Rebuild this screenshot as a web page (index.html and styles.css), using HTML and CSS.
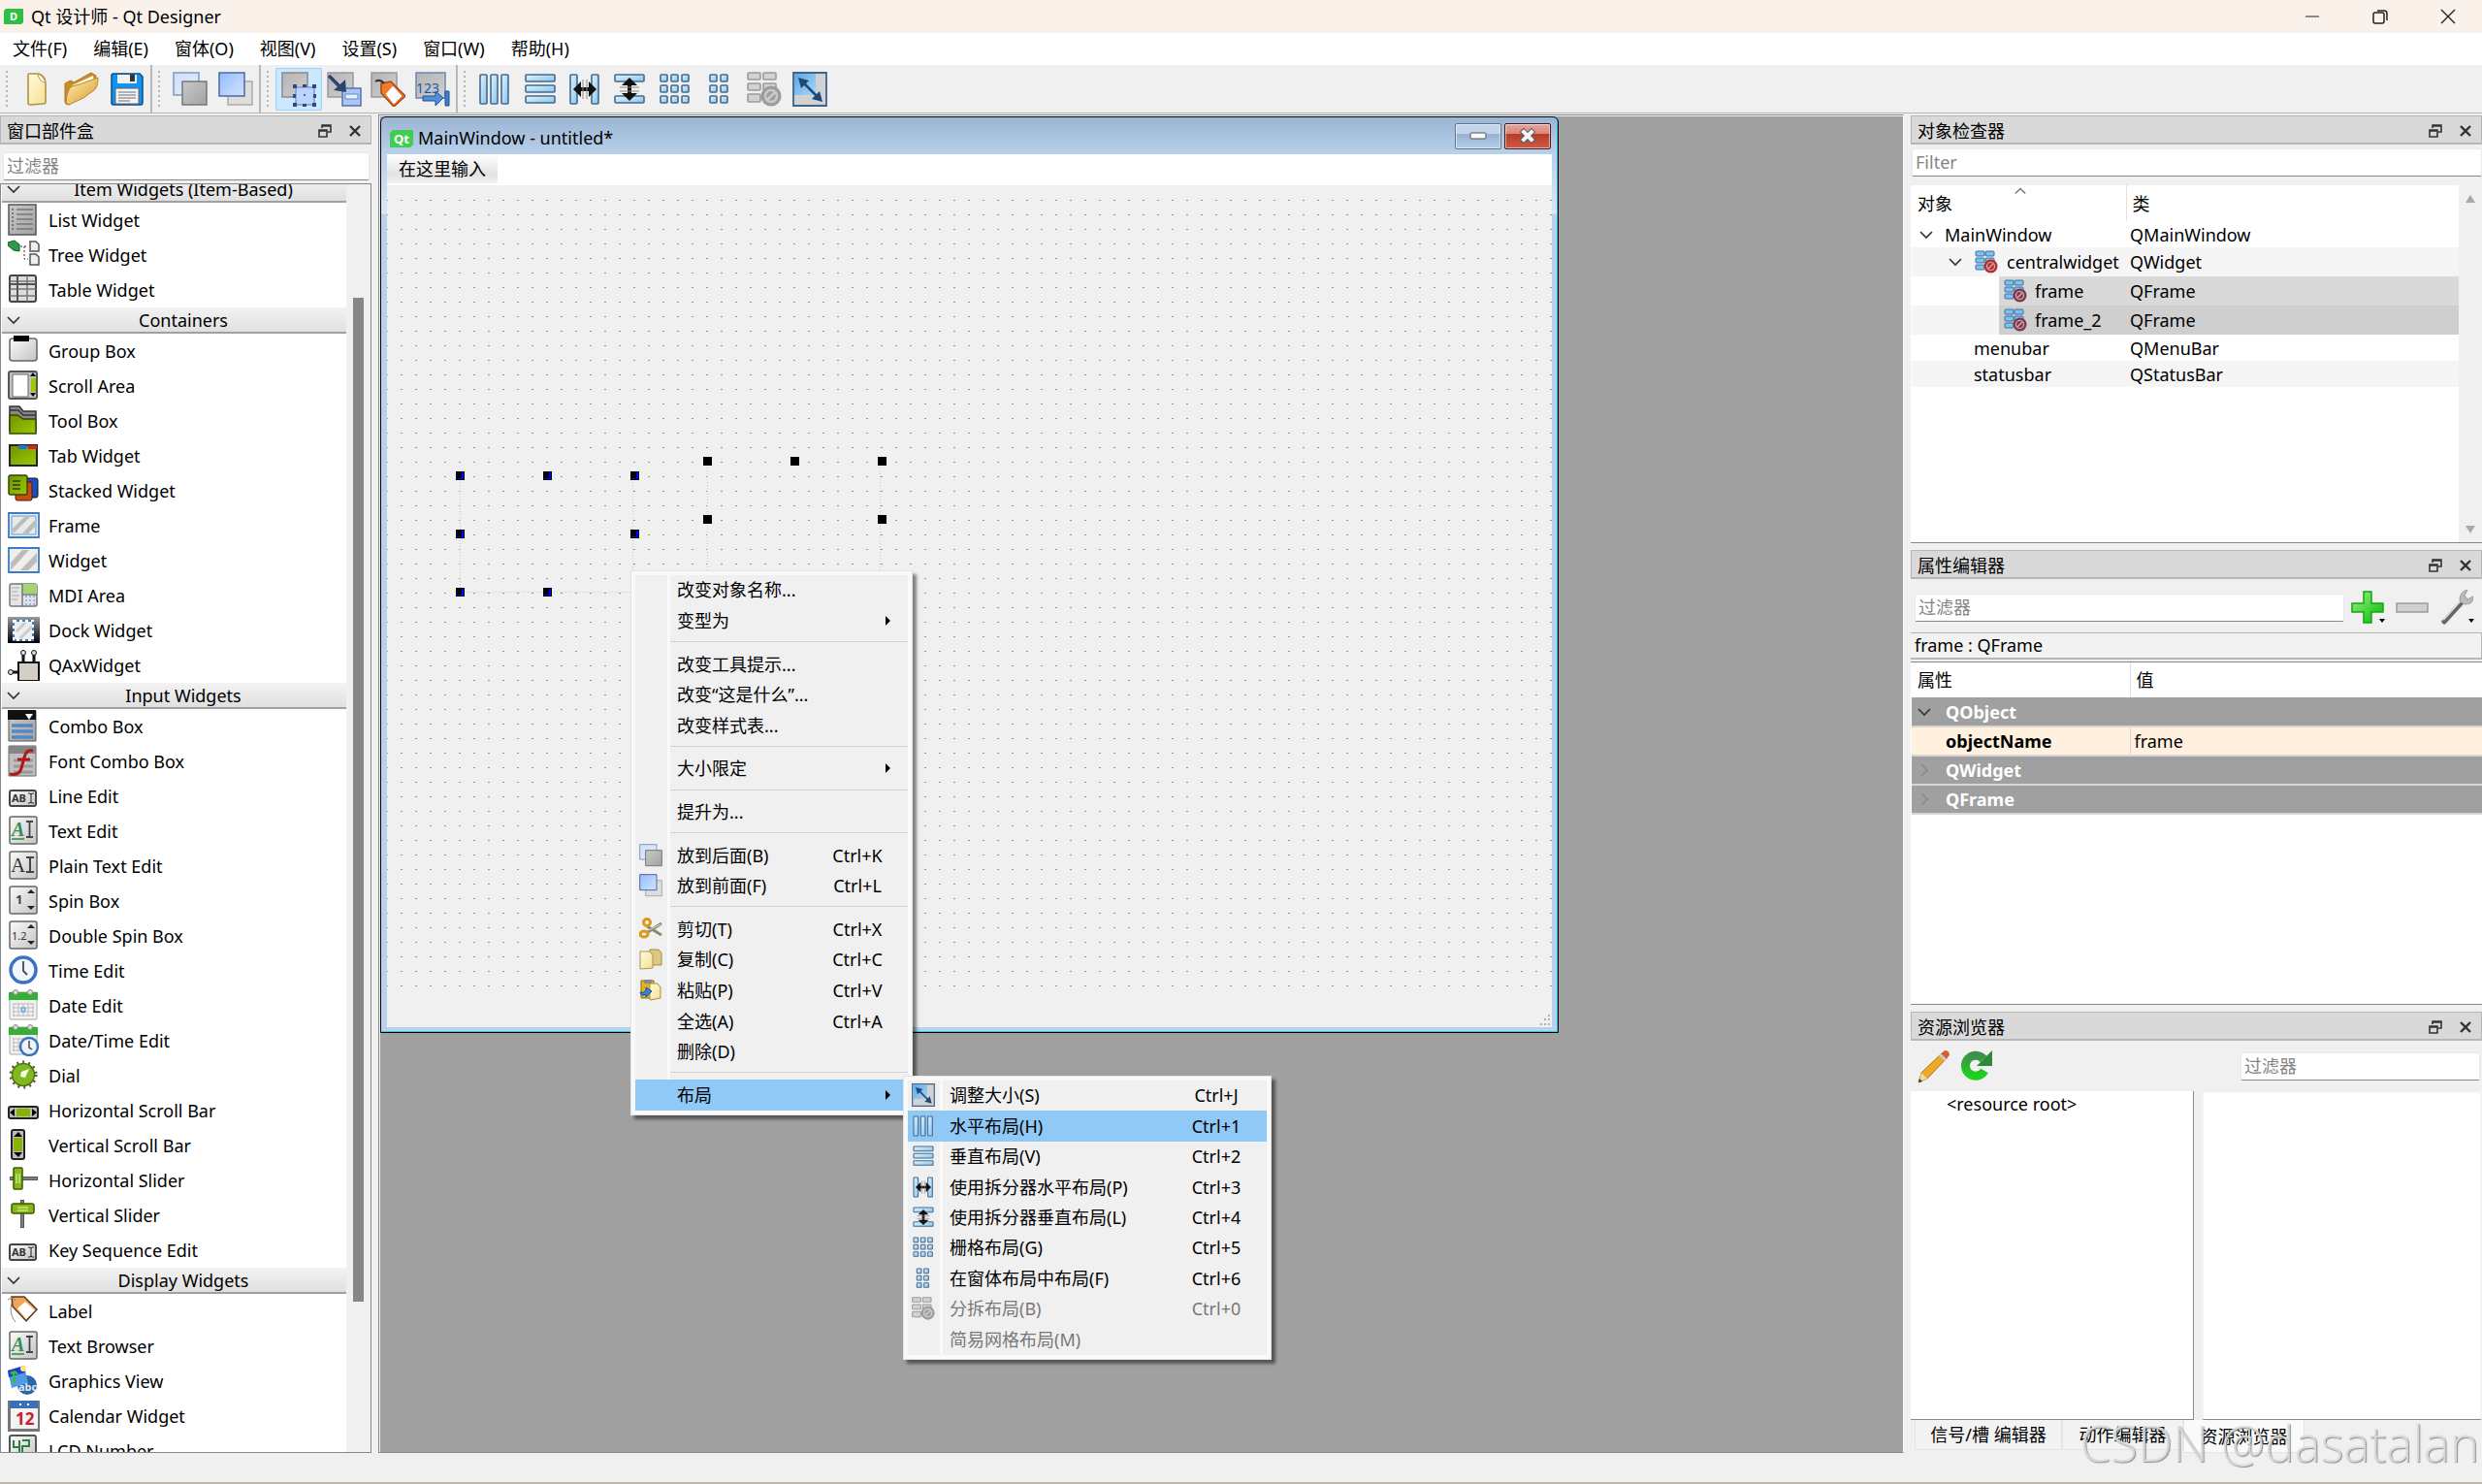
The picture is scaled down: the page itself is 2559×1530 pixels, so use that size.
FILE: index.html
```html
<!DOCTYPE html>
<html lang="zh-CN">
<head>
<meta charset="utf-8">
<title>Qt 设计师 - Qt Designer</title>
<link rel="stylesheet" href="styles.css">
</head>
<body>
<svg class="defs" width="0" height="0" aria-hidden="true">
  <defs>
    <linearGradient id="gGray" x1="0" y1="0" x2="1" y2="1"><stop offset="0" stop-color="#c9c9c9"/><stop offset="1" stop-color="#a2a2a2"/></linearGradient>
    <linearGradient id="gSilver" x1="0" y1="0" x2="1" y2="1"><stop offset="0" stop-color="#b4b4b4"/><stop offset="1" stop-color="#d0d0d0"/></linearGradient>
    <linearGradient id="gLight" x1="0" y1="0" x2="1" y2="1"><stop offset="0" stop-color="#fafafa"/><stop offset="1" stop-color="#c4c4c4"/></linearGradient>
    <linearGradient id="gBlue" x1="0" y1="0" x2="1" y2="1"><stop offset="0" stop-color="#93bcfb"/><stop offset="1" stop-color="#d3e4ff"/></linearGradient>
    <linearGradient id="gPale" x1="0" y1="0" x2="1" y2="1"><stop offset="0" stop-color="#cfe0fa"/><stop offset="1" stop-color="#e2ecfb"/></linearGradient>
    <linearGradient id="gBar" x1="0" y1="0" x2="1" y2="1"><stop offset="0" stop-color="#e2f5ff"/><stop offset="1" stop-color="#86c4ea"/></linearGradient>
    <linearGradient id="gGreen" x1="0" y1="0" x2="1" y2="1"><stop offset="0" stop-color="#6e9400"/><stop offset="1" stop-color="#9cc800"/></linearGradient>
    <linearGradient id="gGold" x1="0" y1="0" x2="1" y2="1"><stop offset="0" stop-color="#fff0b8"/><stop offset="1" stop-color="#d99a26"/></linearGradient>
    <linearGradient id="gPage" x1="0" y1="0" x2="1" y2="1"><stop offset="0" stop-color="#fffbe0"/><stop offset="1" stop-color="#f5e08e"/></linearGradient>
    <linearGradient id="gPlus" x1="0" y1="0" x2="1" y2="1"><stop offset="0" stop-color="#9af58a"/><stop offset="1" stop-color="#04b804"/></linearGradient>
    <linearGradient id="gReload" x1="0" y1="0" x2="0" y2="1"><stop offset="0" stop-color="#3f8f4b"/><stop offset="1" stop-color="#1ed21e"/></linearGradient>
    <linearGradient id="gDark" x1="0" y1="0" x2="0" y2="1"><stop offset="0" stop-color="#999"/><stop offset="1" stop-color="#000"/></linearGradient>
    <linearGradient id="gSky" x1="0" y1="0" x2="1" y2="1"><stop offset="0" stop-color="#5fa6e4"/><stop offset="1" stop-color="#a8d6f4"/></linearGradient>
    <pattern id="dots" x="0" y="-1" width="15" height="15" patternUnits="userSpaceOnUse"><path d="M0 0h1v1h-1zM14 0h1v1h-1z" fill="#929292"/></pattern>
  </defs>

  <!-- toolbar and menu icons -->
  <symbol id="new" viewBox="0 0 36 36"><path d="M9 3q0-1 1-1h10q7 3 7 10v19q0 2-2 2l-14 1q-2 0-2-2z" fill="url(#gPage)" stroke="#b0924a" stroke-width="1.6"/><path d="M19 2q1 8 8 9" fill="#fff" stroke="#b0924a"/></symbol>
  <symbol id="open" viewBox="0 0 36 36"><path d="M1 12l6-3 3 2L28 1l5 3-2 10-26 20q-4 0-4-3z" fill="#c88f28" stroke="#a8761c"/><path d="M8 14L30 4l1 6L12 24z" fill="#fff8df"/><path d="M2 32q1-14 6-17l8-2 19-7q0 10-4 13L20 27 5 34z" fill="url(#gGold)" stroke="#b98728"/></symbol>
  <symbol id="save" viewBox="0 0 36 36"><path d="M2 4q0-2 2-2h27l3 3v27q0 2-2 2H4q-2 0-2-2z" fill="#0f94f4" stroke="#0c4d88" stroke-width="1.5"/><path d="M8 3h20v8q0 1-1 1H9q-1 0-1-1z" fill="#f2f2f2"/><path d="M21 3h5v7h-5z" fill="#333"/><path d="M6 17h24v16H6z" fill="#f5f5f5" stroke="#666"/><path d="M9 21h18M9 24h18M9 27h18M9 30h12" stroke="#999" stroke-width="1.3"/></symbol>
  <symbol id="back" viewBox="0 0 36 36"><path d="M1 1h26v23H1z" fill="url(#gPale)" stroke="#8498bd" stroke-width="1.5"/><path d="M10 10h25v24H10z" fill="url(#gGray)" stroke="#777" stroke-width="1.5"/></symbol>
  <symbol id="front" viewBox="0 0 36 36"><path d="M10 10h25v24H10z" fill="#dedede" stroke="#aaa" stroke-width="1.5"/><path d="M1 1h26v24H1z" fill="url(#gBlue)" stroke="#4c68a0" stroke-width="1.5"/></symbol>
  <symbol id="edit" viewBox="0 0 36 36"><path d="M1 1h26v25H1z" fill="url(#gSilver)" stroke="#8a8a8a" stroke-width="1.500"/><path d="M15 16h19v18H15z" fill="#bcd4fb" stroke="#7f9cd0" stroke-width="1.500"/><path d="M12 13h4v4h-4zM22 13h4v3h-4zM32 13h4v4h-4zM12 23h3v4h-3zM33 23h3v4h-3zM12 32h4v4h-4zM22 33h4v3h-4zM32 32h4v4h-4z" fill="#2f4a80"/><path d="M23 23h2v2h-2z" fill="#2f6bd0"/></symbol>
  <symbol id="signal" viewBox="0 0 36 36"><path d="M1 1h26v25H1z" fill="url(#gSilver)" stroke="#999" stroke-width="1.500"/><path d="M16 17h19v18H16z" fill="#a9c6f6" stroke="#5673a5" stroke-width="1.500"/><path d="M19 23h13v5H19z" fill="#e4efff" stroke="#5d87cc"/><path d="M2 4l12 12" stroke="#2b4570" stroke-width="3.500"/><path d="M19 8l1 13-13-2z" fill="#2b4570"/></symbol>
  <symbol id="buddy" viewBox="0 0 36 36"><path d="M1 1h26v25H1z" fill="url(#gSilver)" stroke="#999" stroke-width="1.500"/><path d="M11 12l10-2 15 15-12 11-13-14z" fill="#f27a2c" stroke="#a8481a" stroke-width="1.500"/><path d="M15 23l8-9 10 11-9 9z" fill="#fff" stroke="#e06a20"/><path d="M5 10q5-3 9 2" fill="none" stroke="#333" stroke-width="2"/></symbol>
  <symbol id="hlay" viewBox="0 0 36 36"><g fill="url(#gBar)" stroke="#46698f" stroke-width="1.6"><rect x="3" y="3" width="7" height="30" rx="1"/><rect x="14" y="3" width="7" height="30" rx="1"/><rect x="25" y="3" width="7" height="30" rx="1"/></g></symbol>
  <symbol id="vlay" viewBox="0 0 36 36"><g fill="url(#gBar)" stroke="#46698f" stroke-width="1.6"><rect x="3" y="3" width="30" height="7" rx="1"/><rect x="3" y="14" width="30" height="7" rx="1"/><rect x="3" y="25" width="30" height="7" rx="1"/></g></symbol>
  <symbol id="hsplit" viewBox="0 0 36 36"><g fill="url(#gBar)" stroke="#46698f" stroke-width="1.6"><rect x="3" y="3" width="7" height="30" rx="1"/><rect x="25" y="3" width="7" height="30" rx="1"/></g><path d="M6 18l8-8v6h8v-6l8 8-8 8v-6h-8v6z" fill="#111"/><path d="M16 8v20M20 8v20" stroke="#888"/></symbol>
  <symbol id="vsplit" viewBox="0 0 36 36"><g fill="url(#gBar)" stroke="#46698f" stroke-width="1.6"><rect x="3" y="3" width="30" height="7" rx="1"/><rect x="3" y="25" width="30" height="7" rx="1"/></g><path d="M18 6l8 8h-6v8h6l-8 8-8-8h6v-8h-6z" fill="#111"/><path d="M8 16h20M8 20h20" stroke="#888"/></symbol>
  <symbol id="grid" viewBox="0 0 36 36"><g fill="url(#gBar)" stroke="#46698f" stroke-width="1.6"><rect x="3" y="3" width="7" height="7" rx="1"/><rect x="14" y="3" width="7" height="7" rx="1"/><rect x="25" y="3" width="7" height="7" rx="1"/><rect x="3" y="14" width="7" height="7" rx="1"/><rect x="14" y="14" width="7" height="7" rx="1"/><rect x="25" y="14" width="7" height="7" rx="1"/><rect x="3" y="25" width="7" height="7" rx="1"/><rect x="14" y="25" width="7" height="7" rx="1"/><rect x="25" y="25" width="7" height="7" rx="1"/></g></symbol>
  <symbol id="form" viewBox="0 0 36 36"><g fill="url(#gBar)" stroke="#46698f" stroke-width="1.6"><rect x="8" y="3" width="7" height="7" rx="1"/><rect x="19" y="3" width="7" height="7" rx="1"/><rect x="8" y="14" width="7" height="7" rx="1"/><rect x="19" y="14" width="7" height="7" rx="1"/><rect x="8" y="25" width="7" height="7" rx="1"/><rect x="19" y="25" width="7" height="7" rx="1"/></g></symbol>
  <symbol id="break" viewBox="0 0 36 36"><g fill="#d2d2d2" stroke="#9b9b9b" stroke-width="1.6"><rect x="1" y="1" width="13" height="7" rx="1"/><rect x="17" y="1" width="13" height="7" rx="1"/><rect x="1" y="12" width="13" height="7" rx="1"/><rect x="17" y="12" width="13" height="7" rx="1"/><rect x="1" y="23" width="13" height="8" rx="1"/></g><circle cx="25" cy="25" r="10.500" fill="#9c9c9c"/><circle cx="25" cy="25" r="6" fill="none" stroke="#c9c9c9" stroke-width="2.500"/><path d="M21 29l8-8" stroke="#c9c9c9" stroke-width="2.500"/></symbol>
  <symbol id="nolay" viewBox="0 0 24 24"><g fill="#7cc2f0" stroke="#3e6c9c"><rect x="1" y="1" width="9" height="5" rx="1"/><rect x="11" y="1" width="9" height="5" rx="1"/><rect x="1" y="8" width="9" height="5" rx="1"/><rect x="11" y="8" width="9" height="5" rx="1"/><rect x="1" y="15" width="9" height="5" rx="1"/></g><circle cx="16.500" cy="16.500" r="7" fill="currentColor"/><circle cx="16.500" cy="16.500" r="4" fill="none" stroke="#d8aeb2" stroke-width="1.200"/><path d="M14 19l5-5" stroke="#d8aeb2" stroke-width="1.200"/></symbol>
  <symbol id="adjust" viewBox="0 0 36 36"><path d="M1 1h34v34H1z" fill="#d2d2d2" stroke="#3f648c" stroke-width="1.800"/><path d="M2 2h22v22H2z" fill="url(#gSky)"/><path d="M10 10l17 17" stroke="#1d4a78" stroke-width="2.500"/><path d="M6 6l11 3-8 8zM31 31l-11-3 8-8z" fill="#1d4a78"/></symbol>
  <symbol id="cut" viewBox="0 0 24 24"><path d="M8 9l15 9M9 15L23 6" stroke="#8c8772" stroke-width="3"/><path d="M10 13L22 7" stroke="#dcd8c6"/><circle cx="8" cy="5" r="3.500" fill="none" stroke="#d99a1c" stroke-width="3"/><ellipse cx="5" cy="17" rx="4" ry="3" fill="none" stroke="#d99a1c" stroke-width="3"/></symbol>
  <symbol id="copy" viewBox="0 0 24 24"><path d="M11 2h9l3 3v13h-12z" fill="#dcc884" stroke="#a58c46"/><path d="M1 4h10l3 4v13l-13 1z" fill="url(#gPage)" stroke="#b0924a"/></symbol>
  <symbol id="paste" viewBox="0 0 24 24"><path d="M2 2h13v18H2z" fill="#e5b31e" stroke="#8d6d16"/><path d="M5 1h8v4H5z" fill="#888"/><path d="M11 5h8l3 4v11l-11 2z" fill="url(#gPage)" stroke="#a58c46"/><path d="M1 14q1 5 6 2v3l6-6-6-4v3q-3 4-6 2z" fill="#2f86e0" stroke="#164f98"/></symbol>

  <!-- dock controls -->
  <symbol id="float" viewBox="0 0 14 14"><path d="M4 4V1h9v7h-3M4 2h9" fill="none" stroke="#333" stroke-width="1.600"/><path d="M1 6h8v7H1zM1 7h8" fill="none" stroke="#333" stroke-width="1.600"/></symbol>
  <symbol id="close" viewBox="0 0 12 12"><path d="M1 1l10 10M11 1L1 11" stroke="#333" stroke-width="2.400"/></symbol>
  <symbol id="chev" viewBox="0 0 14 14"><path d="M1 4l6 6 6-6" fill="none" stroke="currentColor" stroke-width="1.700"/></symbol>
  <symbol id="plus" viewBox="0 0 34 36"><path d="M13 2h8v12h12v9H21v11h-8V23H1v-9h12z" fill="url(#gPlus)" stroke="#12a512" stroke-width="1.500"/></symbol>
  <symbol id="minus" viewBox="0 0 34 36"><path d="M1 14h32v9H1z" fill="#cfcfcf" stroke="#9c9c9c" stroke-width="1.500"/></symbol>
  <symbol id="wrench" viewBox="0 0 34 36"><path d="M4 33L23 12" stroke="#666" stroke-width="5" stroke-linecap="round"/><path d="M3 31L22 10" stroke="#ddd" stroke-width="2"/><path d="M28 0l-3 6 3 4 6-3q0 8-8 8-6-1-6-6 1-7 8-9z" fill="#bbb" stroke="#999"/></symbol>
  <symbol id="pencil" viewBox="0 0 34 36"><path d="M1 35l3-10L26 4l5 5L10 31z" fill="#f0a828" stroke="#a8741c"/><path d="M1 35l3-10 6 6z" fill="#edd6a4"/><path d="M1 35l1-4 3 3z" fill="#333"/><path d="M24 6l4-4q5 0 5 5l-4 4z" fill="#d2622f"/><path d="M22 7l2-2 6 6-2 2z" fill="#ccc"/></symbol>
  <symbol id="reload" viewBox="0 0 34 36"><path d="M25 23a10.500 10.500 0 1 1-1-12" fill="none" stroke="url(#gReload)" stroke-width="9"/><path d="M33 2v16H17z" fill="#2e8a3b"/></symbol>

  <!-- widget box icons -->
  <symbol id="list" viewBox="0 0 33 33"><path d="M1 1h28v31H1z" fill="url(#gGray)" stroke="#555" stroke-width="1.500"/><path d="M9 6h17M9 11h17M9 16h17M9 21h17M9 26h17" stroke="#777" stroke-width="1.500"/><path d="M5 5v24" stroke="#777" stroke-width="2" stroke-dasharray="2 2"/></symbol>
  <symbol id="tree" viewBox="0 0 33 33"><path d="M0 4l7-2 5 4v7l-6-1-6-5z" fill="#2f9a46" stroke="#155b25"/><path d="M13 8h8M17 8v13h4" fill="none" stroke="#333" stroke-dasharray="2 2"/><path d="M23 3h6l3 3v7h-9zM23 16h6l3 3v8h-9z" fill="#eee" stroke="#555" stroke-width="1.500"/></symbol>
  <symbol id="table" viewBox="0 0 33 33"><rect x="2" y="2" width="27" height="27" rx="2" fill="#ddd" stroke="#444" stroke-width="2"/><path d="M2 8h27M2 16h27M2 23h27M20 2v27" stroke="#777" stroke-width="1.500"/><path d="M10 2v27M2 11h27" stroke="#555" stroke-width="2"/></symbol>
  <symbol id="group" viewBox="0 0 33 33"><rect x="2" y="4" width="28" height="23" rx="3" fill="url(#gLight)" stroke="#666" stroke-width="1.500"/><path d="M6 1h16v6H6z" fill="#000"/></symbol>
  <symbol id="scroll" viewBox="0 0 33 33"><rect x="1" y="2" width="29" height="28" rx="2" fill="#c2c2c2" stroke="#555" stroke-width="2"/><path d="M5 5h16v23H5z" fill="#fff" stroke="#666"/><path d="M24 9h5v14h-5z" fill="#9cc800"/><path d="M26 3l3 4h-6zM26 28l3-4h-6z" fill="#000"/></symbol>
  <symbol id="toolbox" viewBox="0 0 33 33"><path d="M2 2h10l4 5h13v20H2z" fill="#888" stroke="#333" stroke-width="1.500"/><path d="M2 6h9l5 5h13" fill="none" stroke="#333" stroke-width="1.500"/><path d="M2 11h8l6 4h13v15H2z" fill="url(#gGreen)" stroke="#344500" stroke-width="1.500"/></symbol>
  <symbol id="tab" viewBox="0 0 33 33"><path d="M2 6h28v21H2z" fill="url(#gGreen)" stroke="#222" stroke-width="2"/><path d="M11 6h9v4h-9z" fill="#1577d6"/><path d="M21 6h9v4h-9z" fill="#d92020"/></symbol>
  <symbol id="stack" viewBox="0 0 33 33"><rect x="17" y="4" width="14" height="20" rx="2" fill="#1b4fc0" stroke="#111"/><rect x="8" y="8" width="17" height="19" rx="2" fill="#cc4a10" stroke="#511"/><rect x="1" y="1" width="19" height="20" rx="2" fill="url(#gGreen)" stroke="#344500" stroke-width="1.500"/><path d="M5 7h8M5 11h8M5 15h8" stroke="#284000" stroke-width="1.500"/></symbol>
  <symbol id="frame" viewBox="0 0 33 33"><path d="M1 4h31v25H1z" fill="#eee" stroke="#3b7cc4" stroke-width="1.800"/><path d="M4 7h25v19H4z" fill="#e9e9e6" stroke="#5c9be0"/><path d="M5 20L17 8h6L6 25zM15 25L28 11v7l-7 7z" fill="#bcbcbc"/></symbol>
  <symbol id="widget" viewBox="0 0 33 33"><path d="M1 4h31v25H1z" fill="#eeeeeb" stroke="#3b7cc4" stroke-width="1.800"/><path d="M3 19L15 6h7L3 27zM13 27L30 9v9l-9 9z" fill="#bcbcbc"/></symbol>
  <symbol id="mdi" viewBox="0 0 33 33"><rect x="2" y="5" width="28" height="23" rx="2" fill="#e5e5e5" stroke="#777" stroke-width="1.500"/><path d="M15 5h15v10H15z" fill="#a4d474"/><path d="M15 5v23M15 16h15" stroke="#777" stroke-width="1.500"/><path d="M4 9h8M4 13h6M4 17h8M4 21h6" stroke="#aaa"/><path d="M18 18h10M18 22h10M18 26h10" stroke="#4c86d4" stroke-dasharray="2 2"/></symbol>
  <symbol id="dock" viewBox="0 0 33 33"><path d="M0 3h33v27H0z" fill="url(#gDark)"/><path d="M6 7h20v20H6z" fill="#eee" stroke="#3b7cc4" stroke-width="2"/><path d="M6 7h20v20H6z" fill="none" stroke="#fff" stroke-width="2" stroke-dasharray="3 3"/><path d="M9 18l9-9M13 25L25 13" stroke="#ccc" stroke-width="3"/></symbol>
  <symbol id="qax" viewBox="0 0 33 33"><path d="M11 14h21v19H11z" fill="#d4cfc6" stroke="#111" stroke-width="2"/><path d="M16 14V5M27 14V5M11 24H3" stroke="#111" stroke-width="3"/><circle cx="16" cy="4" r="2.500" fill="#ddd" stroke="#111"/><circle cx="27" cy="4" r="2.500" fill="#ddd" stroke="#111"/><circle cx="3" cy="24" r="2.500" fill="#ddd" stroke="#111"/></symbol>
  <symbol id="combo" viewBox="0 0 33 33"><path d="M1 1h28v31H1z" fill="url(#gGray)" stroke="#555"/><path d="M0 0h29v10H0z" fill="#111"/><path d="M18 4h8l-4 6z" fill="#fff"/><path d="M4 16h22M4 22h22M4 28h22" stroke="#5486c4" stroke-width="3.500"/></symbol>
  <symbol id="fontcombo" viewBox="0 0 33 33"><path d="M1 1h28v31H1z" fill="#c0c0c0" stroke="#666"/><path d="M1 1h28v8H1z" fill="#858585"/><path d="M6 16h20M6 22h20M6 28h20" stroke="#999" stroke-width="3"/><path d="M26 6q-7-2-9 7l-3 11q-2 8-12 6M10 15h13" fill="none" stroke="#b01818" stroke-width="3"/></symbol>
  <symbol id="edge" viewBox="0 0 33 33"><rect x="2" y="2" width="28" height="28" rx="2" fill="url(#gLight)" stroke="#666" stroke-width="1.500"/></symbol>
  <symbol id="time" viewBox="0 0 33 33"><circle cx="16" cy="16" r="13" fill="#f2f6fa" stroke="#3a74bd" stroke-width="3.500"/><path d="M16 7v10l4 4" fill="none" stroke="#445" stroke-width="1.800"/></symbol>
  <symbol id="date" viewBox="0 0 33 33"><rect x="2" y="3" width="28" height="28" rx="1" fill="#f2f2f2" stroke="#aaa"/><path d="M1 3h30v8H1z" fill="#35b035"/><path d="M5 15h22M5 19h22M5 23h22M5 27h22M6 14v14M11 14v14M16 14v14M21 14v14M26 14v14" stroke="#bbb"/><path d="M14 19h4v4h-4z" fill="#bcd6ff" stroke="#5a8fe0"/><circle cx="8" cy="3" r="2.500" fill="#ddd" stroke="#888"/><circle cx="23" cy="3" r="2.500" fill="#ddd" stroke="#888"/></symbol>
  <symbol id="datetime" viewBox="0 0 33 33"><use href="#date" width="33" height="33"/><circle cx="22" cy="23" r="9" fill="#eef3f9" stroke="#3a74bd" stroke-width="2.500"/><path d="M22 17v7l3 2" fill="none" stroke="#445" stroke-width="1.500"/></symbol>
  <symbol id="dial" viewBox="0 0 33 33"><circle cx="16" cy="16" r="13" fill="none" stroke="#555" stroke-width="3" stroke-dasharray="2 4"/><circle cx="16" cy="16" r="11.500" fill="#7fb81f" stroke="#4d7610" stroke-width="1.500"/><path d="M13 18l1-5 8-3-4 9z" fill="#f4ffe0"/></symbol>
  <symbol id="hscroll" viewBox="0 0 33 33"><rect x="1" y="13" width="30" height="12" rx="2" fill="#bbb" stroke="#222" stroke-width="2"/><path d="M9 15h14v8H9z" fill="#86b400"/><path d="M7 15v8l-5-4zM25 15v8l5-4z" fill="#000"/></symbol>
  <symbol id="vscroll" viewBox="0 0 33 33"><rect x="4" y="1" width="13" height="30" rx="2" fill="#bbb" stroke="#222" stroke-width="2"/><path d="M6 9h9v14H6z" fill="#86b400"/><path d="M6 8h9l-4-5zM6 24h9l-4 5z" fill="#000"/></symbol>
  <symbol id="hslider" viewBox="0 0 33 33"><path d="M2 15h29" stroke="#555" stroke-width="4"/><path d="M3 15h27" stroke="#aaa"/><rect x="6" y="4" width="9" height="22" rx="1" fill="#86b81a" stroke="#3d5800" stroke-width="1.500"/><path d="M9 10v10M12 10v10" stroke="#e6ffa8"/></symbol>
  <symbol id="vslider" viewBox="0 0 33 33"><path d="M15 1v29" stroke="#555" stroke-width="4"/><path d="M15 2v27" stroke="#aaa"/><rect x="4" y="5" width="23" height="10" rx="2" fill="#86b81a" stroke="#3d5800" stroke-width="1.500"/><path d="M10 9h11M10 12h11" stroke="#e6ffa8"/></symbol>
  <symbol id="label" viewBox="0 0 33 33"><path d="M4 2h13l13 13-11 12L5 12z" fill="#f0a45c" stroke="#5b3a1c" stroke-width="1.500"/><path d="M10 14l8-7 10 9-9 9z" fill="#fff"/><path d="M0 5q6-4 8 1M4 8q-3 12 4 20" fill="none" stroke="#888"/></symbol>
  <symbol id="lcd" viewBox="0 0 33 33"><rect x="2" y="1" width="27" height="30" rx="2" fill="url(#gLight)" stroke="#555" stroke-width="2"/><path d="M6 6v7h6M12 6v12M15 6h7v6h-7v7" fill="none" stroke="#2a8040" stroke-width="2"/></symbol>
  <symbol id="handleB" viewBox="0 0 9 9"><path d="M0 0h9v9H0z" fill="#000"/><path d="M1 8h7V1H6v6H1z" fill="#00f"/></symbol>
</svg>

<header class="titlebar">
  <svg class="app-icon" viewBox="0 0 20 16"><path d="M2 0h18v14l-2 2H0V2z" fill="#2fbf45"/><text x="6" y="12" font-size="11" font-weight="bold" fill="#fff">D</text></svg>
  <h1>Qt 设计师 - Qt Designer</h1>
  <div class="win-buttons">
    <button aria-label="最小化"><svg width="16" height="16"><path d="M1 8h14" stroke="#222"/></svg></button>
    <button aria-label="还原"><svg width="16" height="16"><rect x="1" y="4" width="11" height="11" rx="2" fill="none" stroke="#222" stroke-width="1.500"/><path d="M5 2h7q3 0 3 3v7" fill="none" stroke="#222" stroke-width="1.500"/></svg></button>
    <button aria-label="关闭"><svg width="16" height="16"><path d="M1 1l14 14M15 1L1 15" stroke="#222" stroke-width="1.400"/></svg></button>
  </div>
</header>

<nav class="menubar">
  <button>文件(F)</button><button>编辑(E)</button><button>窗体(O)</button><button>视图(V)</button><button>设置(S)</button><button>窗口(W)</button><button>帮助(H)</button>
</nav>

<div class="toolbar">
  <div class="tools file-tools">
    <button aria-label="新建"><svg><use href="#new"/></svg></button><button aria-label="打开"><svg><use href="#open"/></svg></button><button aria-label="保存"><svg><use href="#save"/></svg></button>
  </div>
  <div class="tools order-tools">
    <button aria-label="放到后面"><svg><use href="#back"/></svg></button><button aria-label="放到前面"><svg><use href="#front"/></svg></button>
  </div>
  <div class="tools mode-tools">
    <button class="checked" aria-label="编辑窗口部件"><svg><use href="#edit"/></svg></button><button aria-label="编辑信号/槽"><svg><use href="#signal"/></svg></button><button aria-label="编辑伙伴"><svg><use href="#buddy"/></svg></button><button aria-label="编辑 Tab 顺序"><svg viewBox="0 0 36 36"><path d="M1 1h30v26H1z" fill="url(#gSilver)" stroke="#6f86ad" stroke-width="1.500"/><text x="1" y="22" font-size="14" fill="#1f56a8">123</text><path d="M8 25h13v-5l8 7-8 8v-5H8z" fill="#4d8fe0" stroke="#234f92"/><path d="M31 20h4v15h-4z" fill="#3d7fd2" stroke="#234f92"/></svg></button>
  </div>
  <div class="tools layout-tools">
    <button aria-label="水平布局"><svg><use href="#hlay"/></svg></button><button aria-label="垂直布局"><svg><use href="#vlay"/></svg></button><button aria-label="使用拆分器水平布局"><svg><use href="#hsplit"/></svg></button><button aria-label="使用拆分器垂直布局"><svg><use href="#vsplit"/></svg></button><button aria-label="栅格布局"><svg><use href="#grid"/></svg></button><button aria-label="在窗体布局中布局"><svg><use href="#form"/></svg></button><button disabled aria-label="分拆布局"><svg><use href="#break"/></svg></button><button aria-label="调整大小"><svg><use href="#adjust"/></svg></button>
  </div>
</div>

<main class="workspace">
  <aside class="dock widget-box">
    <div class="dock-title"><h2>窗口部件盒</h2><button aria-label="浮动"><svg class="float"><use href="#float"/></svg></button><button aria-label="关闭"><svg class="close"><use href="#close"/></svg></button></div>
    <input class="filter" type="text" placeholder="过滤器" aria-label="过滤器">
    <div class="widget-tree">
      <div class="widget-list">
        <button class="category"><svg><use href="#chev"/></svg><span>Item Widgets (Item-Based)</span></button>
        <ul>
          <li><svg><use href="#list"/></svg>List Widget</li>
          <li><svg><use href="#tree"/></svg>Tree Widget</li>
          <li><svg><use href="#table"/></svg>Table Widget</li>
        </ul>
        <button class="category"><svg><use href="#chev"/></svg><span>Containers</span></button>
        <ul>
          <li><svg><use href="#group"/></svg>Group Box</li>
          <li><svg><use href="#scroll"/></svg>Scroll Area</li>
          <li><svg><use href="#toolbox"/></svg>Tool Box</li>
          <li><svg><use href="#tab"/></svg>Tab Widget</li>
          <li><svg><use href="#stack"/></svg>Stacked Widget</li>
          <li><svg><use href="#frame"/></svg>Frame</li>
          <li><svg><use href="#widget"/></svg>Widget</li>
          <li><svg><use href="#mdi"/></svg>MDI Area</li>
          <li><svg><use href="#dock"/></svg>Dock Widget</li>
          <li><svg><use href="#qax"/></svg>QAxWidget</li>
        </ul>
        <button class="category"><svg><use href="#chev"/></svg><span>Input Widgets</span></button>
        <ul>
          <li><svg><use href="#combo"/></svg>Combo Box</li>
          <li><svg><use href="#fontcombo"/></svg>Font Combo Box</li>
          <li><svg viewBox="0 0 33 33"><rect x="2" y="11" width="27" height="16" rx="2" fill="url(#gLight)" stroke="#444" stroke-width="2"/><text x="4" y="23" font-size="11" font-weight="bold" fill="#333">AB</text><path d="M21 14h2l1 1 1-1h2M24 15v8M21 24h2l1-1 1 1h2" fill="none" stroke="#222"/></svg>Line Edit</li>
          <li><svg viewBox="0 0 33 33"><use href="#edge" width="33" height="33"/><text class="serif" x="4" y="22" font-size="20" font-style="italic" font-weight="bold" fill="#3a8a50">A</text><path d="M4 25h13" stroke="#2a8a40" stroke-width="1.500"/><path d="M19 7h7M19 23h7M22.500 7v16" stroke="#444" stroke-width="1.800"/></svg>Text Edit</li>
          <li><svg viewBox="0 0 33 33"><use href="#edge" width="33" height="33"/><text class="serif" x="3" y="23" font-size="21" fill="#333">A</text><path d="M19 8h8M19 23h8M23 8v15" stroke="#444" stroke-width="2"/></svg>Plain Text Edit</li>
          <li><svg viewBox="0 0 33 33"><use href="#edge" width="33" height="33"/><text x="8" y="20" font-size="13" font-weight="bold" fill="#444">1</text><path d="M24 5l4 4h-8zM24 26l4-4h-8z" fill="#222"/></svg>Spin Box</li>
          <li><svg viewBox="0 0 33 33"><use href="#edge" width="33" height="33"/><text x="4" y="21" font-size="11" fill="#333">1.2</text><path d="M24 5l4 4h-8zM24 26l4-4h-8z" fill="#222"/></svg>Double Spin Box</li>
          <li><svg><use href="#time"/></svg>Time Edit</li>
          <li><svg><use href="#date"/></svg>Date Edit</li>
          <li><svg><use href="#datetime"/></svg>Date/Time Edit</li>
          <li><svg><use href="#dial"/></svg>Dial</li>
          <li><svg><use href="#hscroll"/></svg>Horizontal Scroll Bar</li>
          <li><svg><use href="#vscroll"/></svg>Vertical Scroll Bar</li>
          <li><svg><use href="#hslider"/></svg>Horizontal Slider</li>
          <li><svg><use href="#vslider"/></svg>Vertical Slider</li>
          <li><svg viewBox="0 0 33 33"><rect x="2" y="11" width="27" height="16" rx="2" fill="url(#gLight)" stroke="#444" stroke-width="2"/><text x="4" y="23" font-size="11" font-weight="bold" fill="#333">AB</text><path d="M21 14h2l1 1 1-1h2M24 15v8M21 24h2l1-1 1 1h2" fill="none" stroke="#222"/></svg>Key Sequence Edit</li>
        </ul>
        <button class="category"><svg><use href="#chev"/></svg><span>Display Widgets</span></button>
        <ul>
          <li><svg><use href="#label"/></svg>Label</li>
          <li><svg viewBox="0 0 33 33"><use href="#edge" width="33" height="33"/><text class="serif" x="4" y="22" font-size="20" font-style="italic" font-weight="bold" fill="#3a8a50">A</text><path d="M4 25h13" stroke="#2a8a40" stroke-width="1.500"/><path d="M19 7h7M19 23h7M22.500 7v16" stroke="#444" stroke-width="1.800"/></svg>Text Browser</li>
          <li><svg viewBox="0 0 33 33"><circle cx="20" cy="21" r="10" fill="#2d66a8"/><path d="M0 6l17-5 4 18-17 5z" fill="#4f9ae4"/><path d="M0 6l17-5 1 7-17 5z" fill="#1f3fd0"/><path d="M3 9q5-3 7 1M6 9l1 10" stroke="#38c038" stroke-width="2.500" fill="none"/><circle cx="16" cy="4" r="3" fill="#ffe477"/><text x="11" y="27" font-size="11" font-weight="bold" fill="#dfe9f5">abc</text></svg>Graphics View</li>
          <li><svg viewBox="0 0 33 33"><path d="M0 1h33v32H0z" fill="#777"/><path d="M3 8h28v22H3z" fill="#f3f3f3"/><path d="M2 1h29v8H2z" fill="#3b6fb6"/><path d="M12 5h2M20 5h2" stroke="#fff" stroke-width="2"/><text x="8" y="26" font-size="17" font-weight="bold" fill="#c8202c">12</text></svg>Calendar Widget</li>
          <li><svg><use href="#lcd"/></svg>LCD Number</li>
        </ul>
      </div>
      <div class="scrollbar"><div class="thumb"></div></div>
    </div>
  </aside>

  <section class="mdi-area">
    <div class="form-window">
      <div class="form-title">
        <svg viewBox="0 0 24 18"><path d="M3 0h21v15l-3 3H0V3z" fill="#41cd52"/><text x="4" y="14" font-size="13" font-weight="bold" fill="#fff">Qt</text></svg>
        <h2>MainWindow - untitled*</h2>
        <button class="aero-min" aria-label="最小化"><svg width="18" height="8"><rect x="1" y="1" width="16" height="6" rx="1" fill="#f8f8f8" stroke="#555"/></svg></button>
        <button class="aero-close" aria-label="关闭"><svg width="20" height="18"><path d="M6 5l8 8M14 5L6 13" stroke="#555b66" stroke-width="6" stroke-linecap="square"/><path d="M6 5l8 8M14 5L6 13" stroke="#f4f4f4" stroke-width="4" stroke-linecap="square"/></svg></button>
      </div>
      <div class="form-client">
        <div class="form-menubar"><button>在这里输入</button></div>
        <svg class="form-canvas">
          <rect width="100%" height="100%" fill="url(#dots)"/>
          <g fill="none" stroke="#c8c8c8" stroke-dasharray="1 2">
            <path d="M75.500 299v119.500H254M253.500 299v120M330.500 284v120M508.500 284v120"/>
          </g>
          <g>
            <use href="#handleB" x="71" y="294" width="9" height="9"/><use href="#handleB" x="161" y="294" width="9" height="9"/><use href="#handleB" x="251" y="294" width="9" height="9"/>
            <use href="#handleB" x="71" y="354" width="9" height="9"/><use href="#handleB" x="251" y="354" width="9" height="9"/>
            <use href="#handleB" x="71" y="414" width="9" height="9"/><use href="#handleB" x="161" y="414" width="9" height="9"/>
          </g>
          <path d="M326 279h9v9h-9zM416 279h9v9h-9zM506 279h9v9h-9zM326 339h9v9h-9zM506 339h9v9h-9z"/>
        </svg>
        <div class="form-status"><svg width="12" height="12"><path d="M9 0h2v2h-2zM5 4h2v2h-2zM9 4h2v2h-2zM1 9h2v2h-2zM5 9h2v2h-2zM9 9h2v2h-2z" fill="#b0b0b0"/></svg></div>
      </div>
    </div>

    <div class="menu context-menu" role="menu">
      <button><span>改变对象名称...</span></button>
      <button><span>变型为</span><i class="arrow"></i></button>
      <hr>
      <button><span>改变工具提示...</span></button>
      <button><span>改变“这是什么”...</span></button>
      <button><span>改变样式表...</span></button>
      <hr>
      <button><span>大小限定</span><i class="arrow"></i></button>
      <hr>
      <button><span>提升为...</span></button>
      <hr>
      <button><svg><use href="#back"/></svg><span>放到后面(B)</span><kbd>Ctrl+K</kbd></button>
      <button><svg><use href="#front"/></svg><span>放到前面(F)</span><kbd>Ctrl+L</kbd></button>
      <hr>
      <button><svg><use href="#cut"/></svg><span>剪切(T)</span><kbd>Ctrl+X</kbd></button>
      <button><svg><use href="#copy"/></svg><span>复制(C)</span><kbd>Ctrl+C</kbd></button>
      <button><svg><use href="#paste"/></svg><span>粘贴(P)</span><kbd>Ctrl+V</kbd></button>
      <button><span>全选(A)</span><kbd>Ctrl+A</kbd></button>
      <button><span>删除(D)</span></button>
      <hr>
      <button class="active"><span>布局</span><i class="arrow"></i></button>
    </div>

    <div class="menu layout-menu" role="menu">
      <button><svg><use href="#adjust"/></svg><span>调整大小(S)</span><kbd>Ctrl+J</kbd></button>
      <button class="active"><svg><use href="#hlay"/></svg><span>水平布局(H)</span><kbd>Ctrl+1</kbd></button>
      <button><svg><use href="#vlay"/></svg><span>垂直布局(V)</span><kbd>Ctrl+2</kbd></button>
      <button><svg><use href="#hsplit"/></svg><span>使用拆分器水平布局(P)</span><kbd>Ctrl+3</kbd></button>
      <button><svg><use href="#vsplit"/></svg><span>使用拆分器垂直布局(L)</span><kbd>Ctrl+4</kbd></button>
      <button><svg><use href="#grid"/></svg><span>栅格布局(G)</span><kbd>Ctrl+5</kbd></button>
      <button><svg><use href="#form"/></svg><span>在窗体布局中布局(F)</span><kbd>Ctrl+6</kbd></button>
      <button disabled><svg><use href="#break"/></svg><span>分拆布局(B)</span><kbd>Ctrl+0</kbd></button>
      <button disabled><span>简易网格布局(M)</span></button>
    </div>
  </section>

  <aside class="right-docks">
    <section class="dock inspector">
      <div class="dock-title"><h2>对象检查器</h2><button aria-label="浮动"><svg class="float"><use href="#float"/></svg></button><button aria-label="关闭"><svg class="close"><use href="#close"/></svg></button></div>
      <input class="filter" type="text" placeholder="Filter" aria-label="Filter">
      <div class="object-tree">
        <table>
          <thead><tr><th>对象<svg class="sort"><use href="#chev"/></svg></th><th>类</th></tr></thead>
          <tbody>
            <tr><td><div class="node d0"><svg class="chev"><use href="#chev"/></svg>MainWindow</div></td><td>QMainWindow</td></tr>
            <tr class="tall"><td><div class="node d1"><svg class="chev"><use href="#chev"/></svg><svg class="lay red"><use href="#nolay"/></svg>centralwidget</div></td><td>QWidget</td></tr>
            <tr class="tall selected"><td><div class="node d2"><svg class="lay plum"><use href="#nolay"/></svg>frame</div></td><td>QFrame</td></tr>
            <tr class="tall selected"><td><div class="node d2"><svg class="lay plum"><use href="#nolay"/></svg>frame_2</div></td><td>QFrame</td></tr>
            <tr><td><div class="node leaf">menubar</div></td><td>QMenuBar</td></tr>
            <tr><td><div class="node leaf">statusbar</div></td><td>QStatusBar</td></tr>
          </tbody>
        </table>
        <div class="scrollbar idle"><i class="up"></i><i class="down"></i></div>
      </div>
    </section>

    <section class="dock properties">
      <div class="dock-title"><h2>属性编辑器</h2><button aria-label="浮动"><svg class="float"><use href="#float"/></svg></button><button aria-label="关闭"><svg class="close"><use href="#close"/></svg></button></div>
      <div class="prop-tools">
        <input class="filter" type="text" placeholder="过滤器" aria-label="过滤属性">
        <button class="drop" aria-label="添加动态属性"><svg><use href="#plus"/></svg></button>
        <button aria-label="删除动态属性"><svg><use href="#minus"/></svg></button>
        <button class="drop" aria-label="配置"><svg><use href="#wrench"/></svg></button>
      </div>
      <div class="class-label">frame : QFrame</div>
      <div class="prop-tree">
        <table>
          <thead><tr><th>属性</th><th>值</th></tr></thead>
          <tbody>
            <tr class="cls"><td colspan="2"><div class="node"><svg class="chev"><use href="#chev"/></svg>QObject</div></td></tr>
            <tr class="prop"><td>objectName</td><td>frame</td></tr>
            <tr class="cls"><td colspan="2"><div class="node"><svg class="chev shut"><use href="#chev"/></svg>QWidget</div></td></tr>
            <tr class="cls"><td colspan="2"><div class="node"><svg class="chev shut"><use href="#chev"/></svg>QFrame</div></td></tr>
          </tbody>
        </table>
      </div>
    </section>

    <section class="dock resources">
      <div class="dock-title"><h2>资源浏览器</h2><button aria-label="浮动"><svg class="float"><use href="#float"/></svg></button><button aria-label="关闭"><svg class="close"><use href="#close"/></svg></button></div>
      <div class="res-tools">
        <button aria-label="编辑资源"><svg><use href="#pencil"/></svg></button>
        <button aria-label="重新加载"><svg><use href="#reload"/></svg></button>
        <input class="filter" type="text" placeholder="过滤器" aria-label="过滤资源">
      </div>
      <div class="res-panes">
        <div class="res-tree">&lt;resource root&gt;</div>
        <div class="res-view"></div>
      </div>
      <div class="tabs">
        <button>信号/槽 编辑器</button><button>动作编辑器</button><button class="current">资源浏览器</button>
      </div>
    </section>
  </aside>
</main>

<footer class="statusbar"></footer>
<div class="watermark">CSDN @dasatalan</div>
</body>
</html>
```

FILE: styles.css
```css
* { box-sizing: border-box; }

body {
  margin: 0;
  height: 100vh;
  display: flex;
  flex-direction: column;
  background: #f0f0f0;
  color: #000;
  font: 18px/24px "Noto Sans", "Noto Sans CJK SC", sans-serif;
  overflow: hidden;
  position: relative;
}

h1, h2, ul { margin: 0; padding: 0; font: inherit; list-style: none; }
button {
  margin: 0;
  padding: 0;
  border: 0;
  background: none;
  font: inherit;
  color: inherit;
  display: flex;
  align-items: center;
  justify-content: center;
}
input { font: inherit; }
svg { flex: none; display: block; }
svg text { font-family: "Noto Sans", sans-serif; }
svg .serif { font-family: "Liberation Serif", serif; }
.defs { position: absolute; }

/* title bar */
.titlebar {
  flex: none;
  height: 34px;
  display: flex;
  align-items: center;
  padding-left: 4px;
  background: #f9f1ea;
}
.titlebar h1 { margin-left: 8px; flex: 1; }
.app-icon { width: 20px; height: 16px; }
.win-buttons { display: flex; }
.win-buttons button { width: 70px; height: 34px; }

/* menu bar */
.menubar {
  flex: none;
  height: 33px;
  display: flex;
  gap: 1px;
  padding-bottom: 1px;
  background: #fff;
}
.menubar button { padding: 0 13px; }

/* tool bars */
.toolbar {
  flex: none;
  height: 50px;
  display: flex;
  border-bottom: 1px solid #b4b8b0;
}
.tools {
  display: flex;
  align-items: center;
  padding: 3px 3px 3px 15px;
  border-right: 2px solid #b8b8b8;
  background: repeating-linear-gradient(180deg, #b5b5b5 0 2px, transparent 2px 5px) 6px 6px / 2px 38px no-repeat;
}
.tools button { flex: 1; height: 44px; }
.tools svg { width: 36px; height: 36px; }
.tools .checked { background: #cce8ff; border: 1px solid #99d1ff; border-radius: 2px; }
.file-tools { width: 157px; padding-right: 1px; }
.order-tools { width: 112px; padding-right: 1px; }
.mode-tools { width: 203px; padding-right: 1px; }
.layout-tools { width: 389px; border-right: 0; }

/* workspace */
.workspace {
  flex: 1;
  min-height: 0;
  display: grid;
  grid-template-columns: 383px minmax(0, 1fr) 589px;
  gap: 7px;
  padding-top: 1px;
}
.dock { display: flex; flex-direction: column; min-height: 0; }
.dock-title {
  flex: none;
  height: 30px;
  display: flex;
  align-items: center;
  gap: 18px;
  padding: 2px 10px 0 6px;
  background: #d9d9d9;
  border: 1px solid #b6b6b6;
  border-bottom-width: 2px;
}
.dock-title h2 { flex: 1; }
.float { width: 14px; height: 14px; }
.close { width: 12px; height: 12px; }
.filter {
  flex: none;
  height: 29px;
  min-width: 0;
  padding: 0 3px 1px;
  border: 1px solid #e8e8e8;
  border-bottom-color: #868686;
  border-radius: 2px;
  background: #fff;
}
.filter::placeholder { color: #858585; opacity: 1; }

/* widget box */
.widget-box { padding-top: 1px; }
.widget-box .filter { margin: 8px 2px 3px 3px; }
.widget-tree {
  flex: 1;
  min-height: 0;
  display: flex;
  border: 1px solid #828790;
  background: #fff;
  overflow: hidden;
}
.widget-list { flex: 1; margin-top: -8px; padding-left: 1px; }
.category {
  width: 100%;
  height: 27px;
  padding-left: 5px;
  background: linear-gradient(#f3f3f3, #e0e0e0);
  border-bottom: 2px solid #a0a0a0;
}
.category span { flex: 1; }
.category svg { width: 14px; height: 14px; color: #333; }
.widget-list li {
  height: 36px;
  display: flex;
  align-items: center;
  gap: 9px;
  padding: 0 0 1px 6px;
}
.widget-list li svg { width: 33px; height: 33px; }
.scrollbar { flex: none; width: 25px; background: #f0f0f0; }
.scrollbar .thumb { width: 11px; height: 1035px; margin: 117px 0 0 7px; background: #868686; }

/* form editor area */
.mdi-area {
  position: relative;
  min-width: 0;
  background: #a0a0a0;
  border: 1px solid #828790;
  border-right-color: #f8f8f8;
  box-shadow: inset 1px 1px 0 #f4f4f4;
  overflow: hidden;
}
.form-window {
  position: absolute;
  left: 1px;
  top: 1px;
  width: 1215px;
  height: 945px;
  display: flex;
  flex-direction: column;
  padding: 0 6px 5px;
  border: 1px solid #000;
  border-radius: 6px 6px 0 0;
  background: linear-gradient(#9ab5d3, #b9d1ea 38px, #dbe7f4 99px, #b9d1ea 100px);
  box-shadow: inset -1px -1px 0 #35cbe4;
}
.form-title {
  flex: none;
  height: 38px;
  display: flex;
  align-items: center;
  padding: 0 1px 0 3px;
}
.form-title > svg { width: 24px; height: 18px; margin-top: 6px; }
.form-title h2 { flex: 1; margin-left: 5px; padding-top: 3px; }
.aero-min, .aero-close { width: 48px; height: 27px; border-radius: 2px; box-shadow: inset 0 0 0 1px #ffffff88; }
.aero-min { margin-right: 3px; border: 1px solid #5e7590; background: linear-gradient(#c2d5ea 0 40%, #98b2cf 41%, #b4cce6); }
.aero-close { border: 1px solid #481a20; background: linear-gradient(#e6a79c, #da8577 40%, #b83c26 41%, #cd5c48); }
.form-client { flex: 1; min-height: 0; display: flex; flex-direction: column; background: #f0f0f0; }
.form-menubar { flex: none; height: 33px; padding-bottom: 3px; background: #fff; border-bottom: 1px solid #f0f0f0; }
.form-menubar button { height: 30px; padding: 0 12px; background: linear-gradient(#fff, #e2e2e2 70%, #f4f4f4); }
.form-canvas { flex: 1; width: 100%; min-height: 0; }
.form-status { flex: none; height: 36px; display: flex; align-items: flex-end; justify-content: flex-end; padding: 1px; }

/* popup menus */
.menu {
  position: absolute;
  display: flex;
  flex-direction: column;
  border: 1px solid #e4e4e4;
  box-shadow: inset 0 0 0 4px #f9f9f9, 4px 4px 3px #00000077;
  padding: 4px;
  background: linear-gradient(#fafafa, #fafafa) 37px 0 / 3px 100% no-repeat #f0f0f0;
}
.context-menu { left: 259px; top: 469px; width: 291px; height: 562px; }
.layout-menu { left: 540px; top: 990px; width: 380px; height: 293px; }
.menu button {
  flex: 63;
  min-height: 0;
  display: grid;
  grid-template-columns: 24px 1fr auto;
  column-gap: 15px;
  justify-items: start;
  padding: 0 23px 1px 4px;
  white-space: nowrap;
}
.menu svg { width: 24px; height: 24px; grid-row: 1; grid-column: 1; }
.menu span { grid-row: 1; grid-column: 2; }
.menu kbd { font: inherit; grid-row: 1; grid-column: 3; width: 58px; }
.menu .arrow {
  grid-row: 1;
  grid-column: 3;
  margin-right: -6px;
  border: 5px solid transparent;
  border-left-color: #000;
  border-right-width: 0;
}
.context-menu .arrow { margin-right: -7px; }
.menu hr {
  flex: 27;
  width: auto;
  align-self: stretch;
  margin: 0 0 0 36px;
  border: 0;
  background: linear-gradient(#d2d2d2, #d2d2d2) 0 5px / 100% 1px no-repeat;
}
.menu .active { background: #90c8f6; }
.menu button:disabled { color: #787878; }

/* right column */
.right-docks { display: flex; flex-direction: column; min-height: 0; padding-top: 1px; }
.scrollbar.idle { width: 24px; display: flex; flex-direction: column; justify-content: space-between; align-items: center; padding: 10px 0 9px; }
.idle i { border: 5px solid transparent; }
.idle .up { border-top: 0; border-bottom: 8px solid #a8a8a8; }
.idle .down { border-bottom: 0; border-top: 8px solid #a8a8a8; }

table { border-collapse: collapse; table-layout: fixed; width: 100%; }
th, td { padding: 0; text-align: left; font-weight: normal; height: 27px; }
th { height: 37px; padding-left: 6px; position: relative; }
th:first-child { width: 221px; border-right: 1px solid #e0e0e0; }
.node { display: flex; align-items: center; }
.chev { width: 14px; height: 14px; color: #333; }

.inspector { height: 441px; flex: none; }
.inspector .filter { margin: 4px 0 9px 1px; }
.object-tree { flex: 1; min-height: 0; display: flex; background: #fff; border-bottom: 1px solid #828790; align-items: stretch; }
.object-tree table { flex: 1; width: auto; align-self: flex-start; margin-left: 1px; }
.object-tree td { height: 27px; }
.object-tree .tall td { height: 30px; }
.object-tree td + td { padding-left: 4px; }
.object-tree tbody tr:nth-child(even) { background: #f5f5f5; }
.object-tree tr.selected td + td, .selected .node { background: #d9d9d9; }
.object-tree tr.selected:nth-child(even) td + td, .selected:nth-child(even) .node { background: #cfcfcf; }
.sort { position: absolute; left: 106px; top: 0; width: 12px; height: 12px; transform: rotate(180deg); color: #777; }
.d0 { padding-left: 8px; gap: 12px; }
.d1 { padding-left: 38px; gap: 13px; }
.d1 .lay { margin-right: -4px; }
.d2 { margin-left: 90px; padding-left: 5px; gap: 8px; height: 30px; }
.leaf { padding-left: 64px; }
.lay { width: 24px; height: 24px; }
.red { color: #b32f2f; }
.plum { color: #7d3a50; }

.properties { height: 469px; flex: none; margin-top: 7px; }
.prop-tools { flex: none; display: flex; align-items: center; height: 55px; padding: 3px 9px 0 4px; gap: 12px; }
.prop-tools .filter { flex: 1; margin-right: -5px; }
.prop-tools button { position: relative; }
.prop-tools svg, .res-tools svg { width: 34px; height: 36px; }
.drop::after { content: ""; position: absolute; right: -1px; bottom: 2px; border: 3px solid transparent; border-top: 4px solid #000; border-bottom: 0; }
.class-label { flex: none; height: 28px; padding-left: 4px; border: 1px solid #b6b6b6; border-bottom-width: 2px; border-left: 0; background: #f2f2f2; }
.prop-tree { flex: 1; margin-top: 2px; padding-left: 1px; background: #fff; border: solid #828790; border-width: 1px 0; }
.prop-tree th { height: 36px; }
.prop-tree th:first-child { width: 225px; }
.prop-tree td { height: 30px; }
.cls { background: #a0a0a0; color: #fff; border-bottom: 2px solid #d6d6d6; }
.cls td { font-weight: bold; }
.cls .node { padding-left: 6px; gap: 15px; }
.shut { transform: rotate(-90deg); color: #8a8a8a; }
.prop { background: #fff1de; border-bottom: 2px solid #d6d6d6; }
.prop td:first-child { padding-left: 35px; font-weight: bold; border-right: 1px solid #d6d6d6; }
.prop-tree .prop td + td { padding-left: 4px; }

.resources { flex: 1; margin-top: 7px; }
.res-tools { flex: none; display: flex; align-items: center; height: 52px; padding: 0 2px 0 7px; gap: 10px; }
.res-tools .filter { width: 247px; margin-left: auto; }
.res-panes { flex: 1; min-height: 0; display: grid; grid-template-columns: 292px 1fr; gap: 8px; }
.res-tree { padding: 1px 0 0 37px; background: #fff; border: solid #828790; border-width: 0 1px 1px 0; }
.res-view { background: #fff; border: 2px solid #f4f4f4; border-bottom: 1px solid #828790; }
.tabs { flex: none; height: 34px; display: flex; align-items: flex-start; padding-left: 4px; }
.tabs button { width: 125px; height: 31px; background: #f3f3f3; border: 1px solid #e4e4e4; border-top: 0; }
.tabs button:first-child { width: 152px; }
.tabs .current { height: 34px; background: #fafafa; }

.statusbar { flex: none; height: 32px; border-bottom: 2px solid #c0b8ae; }
.watermark {
  position: absolute;
  right: 3px;
  bottom: 18px;
  font-size: 51px;
  line-height: 50px;
  font-family: "Open Sans", "Noto Sans", sans-serif;
  font-weight: 300;
  color: #dededee0;
  text-shadow: 1px 1px 1px #777777cc;
  pointer-events: none;
}
```
